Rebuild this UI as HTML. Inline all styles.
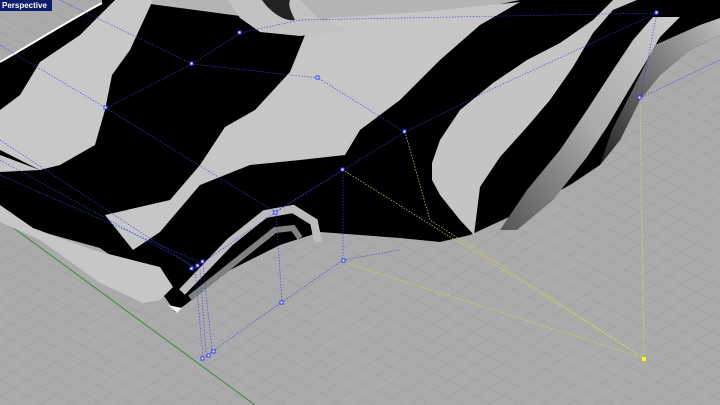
<!DOCTYPE html>
<html><head><meta charset="utf-8"><style>
html,body{margin:0;padding:0;width:720px;height:405px;overflow:hidden;background:#a9a9a9}
svg{display:block}
.lbl{position:absolute;left:0;top:0;width:50px;height:11px;background:#0c1c6c;color:#fff;font:bold 8px "Liberation Sans",sans-serif;line-height:11px;padding-left:2px}
</style></head><body>
<svg width="720" height="405" viewBox="0 0 720 405" xmlns="http://www.w3.org/2000/svg">
<defs>
<pattern id="g1" width="14" height="14" patternUnits="userSpaceOnUse" patternTransform="rotate(-32)"><line x1="0" y1="0" x2="14" y2="0" stroke="#9b9b9b" stroke-width="0.8"/></pattern>
<pattern id="g2" width="14" height="14" patternUnits="userSpaceOnUse" patternTransform="rotate(28)"><line x1="0" y1="0" x2="14" y2="0" stroke="#9b9b9b" stroke-width="0.8"/></pattern>
<linearGradient id="gc" x1="0" y1="1" x2="1" y2="0"><stop offset="0" stop-color="#555"/><stop offset="0.5" stop-color="#aaa"/><stop offset="1" stop-color="#ccc"/></linearGradient>
<linearGradient id="gd" x1="0" y1="1" x2="1" y2="0"><stop offset="0" stop-color="#222"/><stop offset="1" stop-color="#bbb"/></linearGradient>
</defs>
<rect width="720" height="405" fill="#aaa"/>
<rect width="720" height="405" fill="url(#g1)"/>
<rect width="720" height="405" fill="url(#g2)"/>
<line x1="0" y1="218" x2="255" y2="405" stroke="#3a8a3a" stroke-width="1"/>
<!-- surface silhouette -->
<path d="M0,62 C30,45 70,20 102,3 L102,0 L720,0 L720,35 L690,50 L660,75 L640,100 L620,140 L600,165 L570,185 L520,212 L470,235 L440,242 L400,238 L320,232 L280,245 L230,270 L185,305 L175,312 L160,290 L100,248 L35,230 L0,210 Z" fill="#000"/>
<path d="M0,62 C30,45 70,20 102,3" fill="none" stroke="#fff" stroke-width="2"/>
<!-- top gray ground patch -->
<path d="M120,0 L520,0 L470,10 L360,30 L330,28 Z" fill="#b4b4b4"/>
<!-- left big light band -->
<path d="M115,0 L153,0 L130,50 L112,75 L105,110 L95,145 L60,165 L40,170 L0,150 L0,110 L20,95 L40,62 L80,35 Z" fill="#c8c8c8"/>
<!-- diagonal big light band -->
<path d="M105,215 L170,200 L200,165 L225,127 L255,110 L290,72 L305,35 L330,18 L420,12 L520,2 L480,25 L440,60 L400,100 L360,130 L345,155 L300,160 L250,165 L200,185 L160,232 L133,250 Z" fill="#c6c6c6"/>
<!-- top center saddle -->
<path d="M228,0 L300,0 L320,20 L352,30 L300,36 L260,32 L240,18 Z" fill="#c2c2c2"/>
<path d="M262,0 C270,12 285,22 295,20 C290,10 288,4 290,0 Z" fill="#222"/>
<!-- band B -->
<path d="M432,163 L440,140 L460,110 L493,83 L527,60 L560,43 L593,20 L613,0 L637,0 L613,10 L593,33 L573,67 L550,100 L527,127 L500,157 L480,187 L474,235 L460,220 L440,195 L432,180 Z" fill="#c4c4c4"/>
<!-- band C -->
<path d="M500,230 L527,190 L560,150 L587,110 L613,70 L633,40 L653,17 L680,17 L660,37 L647,60 L627,93 L607,127 L587,157 L553,200 L517,230 Z" fill="url(#gc)"/>
<!-- band D -->
<path d="M655,45 L700,25 L720,18 L720,35 L690,50 L660,75 L640,100 L620,140 L600,165 L612,130 L630,95 L645,65 Z" fill="url(#gd)"/>
<!-- lower left band -->
<path d="M0,205 L33,228 L93,250 L140,262 L160,267 L173,287 L160,300 L143,303 L100,283 L40,240 L0,222 Z" fill="#c6c6c6"/>
<path d="M0,155 L40,170 L0,172 Z" fill="#c6c6c6"/>
<!-- nested arcs -->
<path d="M182,292 L230,242 L265,214 L293,209 L314,222 L318,242" fill="none" stroke="#bcbcbc" stroke-width="8"/>
<path d="M190,298 L240,258 L275,230 L293,228 L300,238" fill="none" stroke="#808080" stroke-width="6"/>
<path d="M168,305 L182,308 L177,313 Z" fill="#eee"/>
<!-- control lines -->
<g stroke="#3344dd" stroke-width="0.7" stroke-dasharray="1.5,1.5" fill="none" opacity="0.9">
<path d="M0,45 L106,108 L192,64 L318,78 L405,132 L490,90 L657,13"/>
<path d="M60,0 L192,64 L240,33 L300,20 L657,13"/>
<path d="M106,108 L275,212 L343,170 L405,132"/>
<path d="M0,140 L195,268 L276,212 L343,170"/>
<path d="M0,160 L200,270 L206,352 M0,175 L203,264 L212,350 M195,268 L203,358"/>
<path d="M276,212 L282,302 L343,260 L343,170 M203,358 L282,302"/>
<path d="M640,98 L657,13 M640,98 L720,60 M343,260 L400,250"/>
</g>
<g stroke="#dddd44" stroke-width="0.7" stroke-dasharray="1.5,1.5" fill="none">
<path d="M644,358 L640,98 M644,358 L343,170 M644,358 L343,262 M644,358 L430,220 L405,132"/>
</g>
<g fill="#fff" stroke="#33f" stroke-width="1">
<rect x="104" y="106" width="3" height="3"/><rect x="190" y="62" width="3" height="3"/><rect x="316" y="76" width="3" height="3"/>
<rect x="403" y="130" width="3" height="3"/><rect x="238" y="31" width="3" height="3"/><rect x="655" y="11" width="3" height="3"/>
<rect x="274" y="211" width="3" height="3"/><rect x="341" y="168" width="3" height="3"/><rect x="638" y="96" width="3" height="3"/>
<rect x="190" y="267" width="3" height="3"/><rect x="196" y="264" width="3" height="3"/><rect x="201" y="260" width="3" height="3"/>
<rect x="201" y="357" width="3" height="3"/><rect x="207" y="354" width="3" height="3"/><rect x="212" y="350" width="3" height="3"/>
<rect x="280" y="301" width="3" height="3"/><rect x="342" y="259" width="3" height="3"/>
</g>
<rect x="642" y="357" width="4" height="4" fill="#ff0"/>
</svg>
<div class="lbl">Perspective</div>
</body></html>
